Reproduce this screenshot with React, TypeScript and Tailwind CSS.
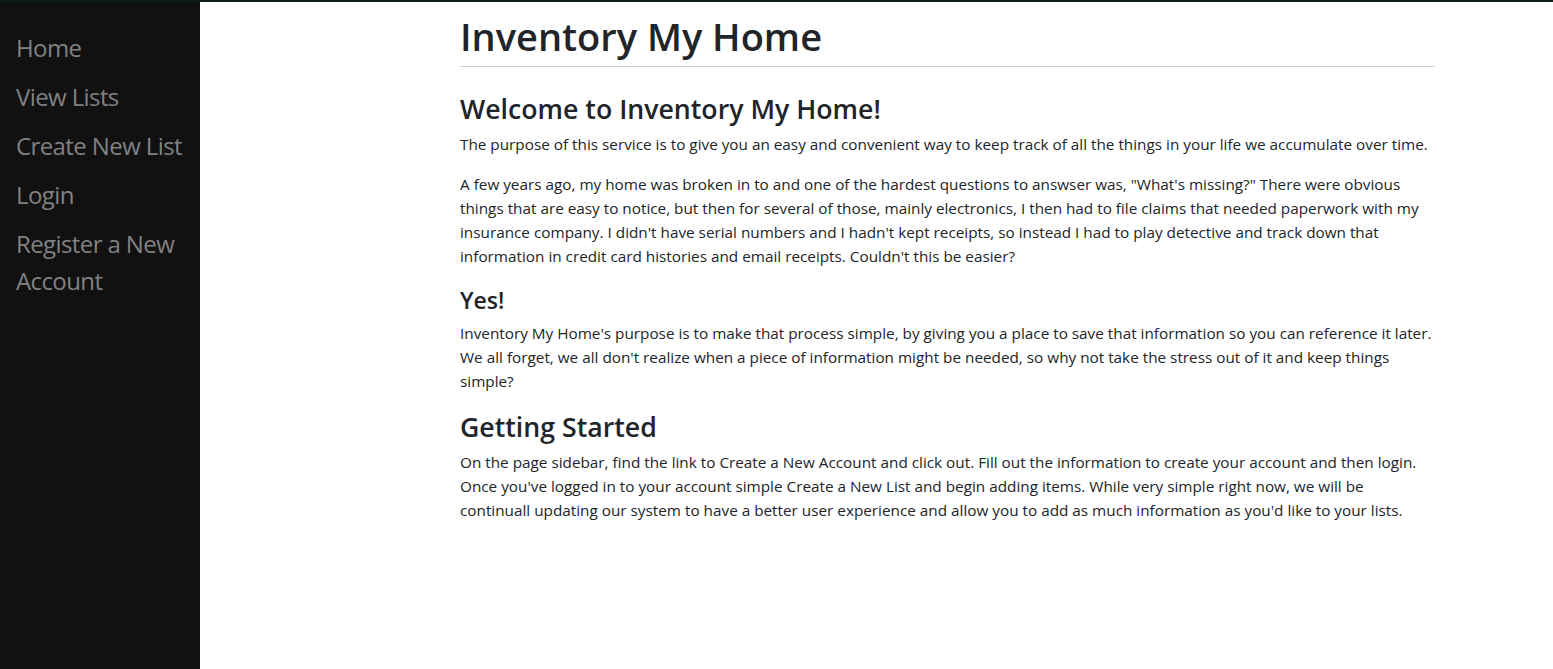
import React from 'react';

const links = ['Home', 'View Lists', 'Create New List', 'Login', 'Register a New Account'];

const App: React.FC = () => {
  return (
    <div className="h-screen flex flex-col bg-white overflow-hidden font-['Open_Sans',_'Noto_Sans',_sans-serif]">
      <div className="h-[2px] w-full bg-[#0f1c1f] shrink-0" />
      <div className="flex flex-1 min-h-0">
        <nav className="w-[200px] shrink-0 bg-[#111111] pt-[21px]">
          {links.map((l) => (
            <a
              key={l}
              href="#"
              className="block pl-4 pr-2 py-[6px] text-[24px] tracking-[-0.6px] leading-[37px] text-[#818181] hover:text-[#f1f1f1]"
            >
              {l}
            </a>
          ))}
        </nav>
        <main className="flex-1 pl-[260px] pt-[10px]">
          <div className="w-[975px] text-[#212529] text-[15.3px] leading-[24px]">
            <h1 className="text-[38px] leading-[48px] font-semibold pb-[6px] border-b border-[#cfcfcf]">
              Inventory My Home
            </h1>
            <h3 className="mt-[25px] mb-[6px] text-[26.7px] leading-[34px] font-semibold">
              Welcome to Inventory My Home!
            </h3>
            <p className="mb-4">
              The purpose of this service is to give you an easy and convenient way to keep track of all the things in your life we accumulate over time.
            </p>
            <p className="mb-[18px]">
              A few years ago, my home was broken in to and one of the hardest questions to answser was, "What's missing?" There were obvious things that are easy to notice, but then for several of those, mainly electronics, I then had to file claims that needed paperwork with my insurance company. I didn't have serial numbers and I hadn't kept receipts, so instead I had to play detective and track down that information in credit card histories and email receipts. Couldn't this be easier?
            </p>
            <h4 className="mb-[6px] text-[23px] leading-[29px] font-semibold">Yes!</h4>
            <p className="mb-[17px]">
              Inventory My Home's purpose is to make that process simple, by giving you a place to save that information so you can reference it later. We all forget, we all don't realize when a piece of information might be needed, so why not take the stress out of it and keep things simple?
            </p>
            <h3 className="mb-[6px] text-[26.7px] leading-[34px] font-semibold">Getting Started</h3>
            <p>
              On the page sidebar, find the link to Create a New Account and click out. Fill out the information to create your account and then login. Once you've logged in to your account simple Create a New List and begin adding items. While very simple right now, we will be continuall updating our system to have a better user experience and allow you to add as much information as you'd like to your lists.
            </p>
          </div>
        </main>
      </div>
    </div>
  );
};

export default App;
